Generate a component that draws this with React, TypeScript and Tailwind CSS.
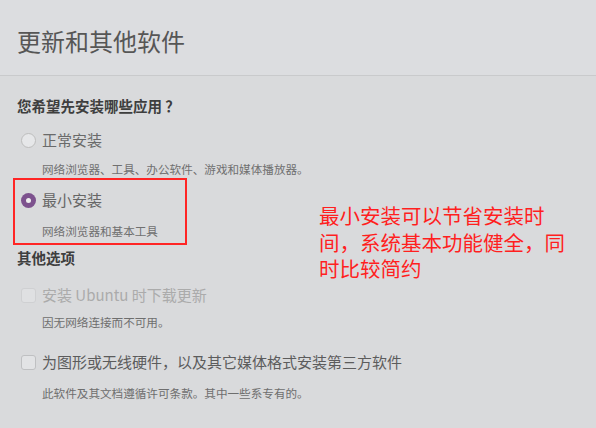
import React from "react";

const font = { fontFamily: '"Noto Sans CJK SC", "Noto Sans", sans-serif' };

export default function App() {
  return (
    <div className="relative w-[596px] h-[428px] overflow-hidden bg-[#d9dadc]" style={font}>
      <div className="h-[75px] flex items-center pl-[17px] bg-[#dcdde0]">
        <span className="text-[24px] text-[#565656] leading-none mt-[6px]">更新和其他软件</span>
      </div>
      <div className="h-px bg-[#c9cacc]" />
      <div className="pl-[17px] flex flex-col">
        <div className="mt-[20px] h-[20px] flex items-center text-[14.5px] font-bold text-[#3e3e3e]">您希望先安装哪些应用 ？</div>
        <div className="mt-[14px] h-[20px] flex items-center gap-[6px] pl-[4px]">
          <span className="shrink-0 w-[15px] h-[15px] rounded-full border border-[#bdbdbd] bg-[#e6e7e9]" />
          <span className="text-[15px] text-[#6a6a6a]">正常安装</span>
        </div>
        <div className="mt-[10px] h-[20px] flex items-center pl-[25px] text-[11.6px] text-[#707070]">网络浏览器、工具、办公软件、游戏和媒体播放器。</div>
        <div className="mt-[10px] h-[20px] flex items-center gap-[6px] pl-[4px]">
          <span className="shrink-0 w-[15px] h-[15px] rounded-full bg-[#7d528e] flex items-center justify-center">
            <span className="w-[5px] h-[5px] rounded-full bg-[#eeeeee]" />
          </span>
          <span className="text-[15px] text-[#666666]">最小安装</span>
        </div>
        <div className="mt-[12px] h-[20px] flex items-center pl-[25px] text-[11.6px] text-[#707070]">网络浏览器和基本工具</div>
        <div className="mt-[6px] h-[20px] flex items-center text-[14.5px] font-bold text-[#3e3e3e]">其他选项</div>
        <div className="mt-[17px] h-[20px] flex items-center gap-[6px] pl-[4px]">
          <span className="shrink-0 w-[15px] h-[15px] rounded-[3px] border border-[#cfd0d2] bg-[#dfe0e2]" />
          <span className="text-[15px] text-[#ababab]">安装 Ubuntu 时下载更新</span>
        </div>
        <div className="mt-[8px] h-[20px] flex items-center pl-[25px] text-[11.6px] text-[#6e6e6e]">因无网络连接而不可用。</div>
        <div className="mt-[19px] h-[20px] flex items-center gap-[6px] pl-[4px]">
          <span className="shrink-0 w-[15px] h-[15px] rounded-[3px] border border-[#bfc0c2] bg-[#e2e3e5]" />
          <span className="text-[15px] text-[#5c5c5c]">为图形或无线硬件，以及其它媒体格式安装第三方软件</span>
        </div>
        <div className="mt-[12px] h-[20px] flex items-center pl-[25px] text-[11.6px] text-[#6e6e6e]">此软件及其文档遵循许可条款。其中一些系专有的。</div>
      </div>

      <div className="absolute left-[13px] top-[178px] w-[174px] h-[67px] border-2 border-[#ff2525]" />
      <div className="absolute left-[319px] top-[202px] w-[270px] whitespace-nowrap text-[20.5px] leading-[26.5px] text-[#ff1f1f]">
        <div>最小安装可以节省安装时</div>
        <div>间，系统基本功能健全，同</div>
        <div>时比较简约</div>
      </div>
    </div>
  );
}
